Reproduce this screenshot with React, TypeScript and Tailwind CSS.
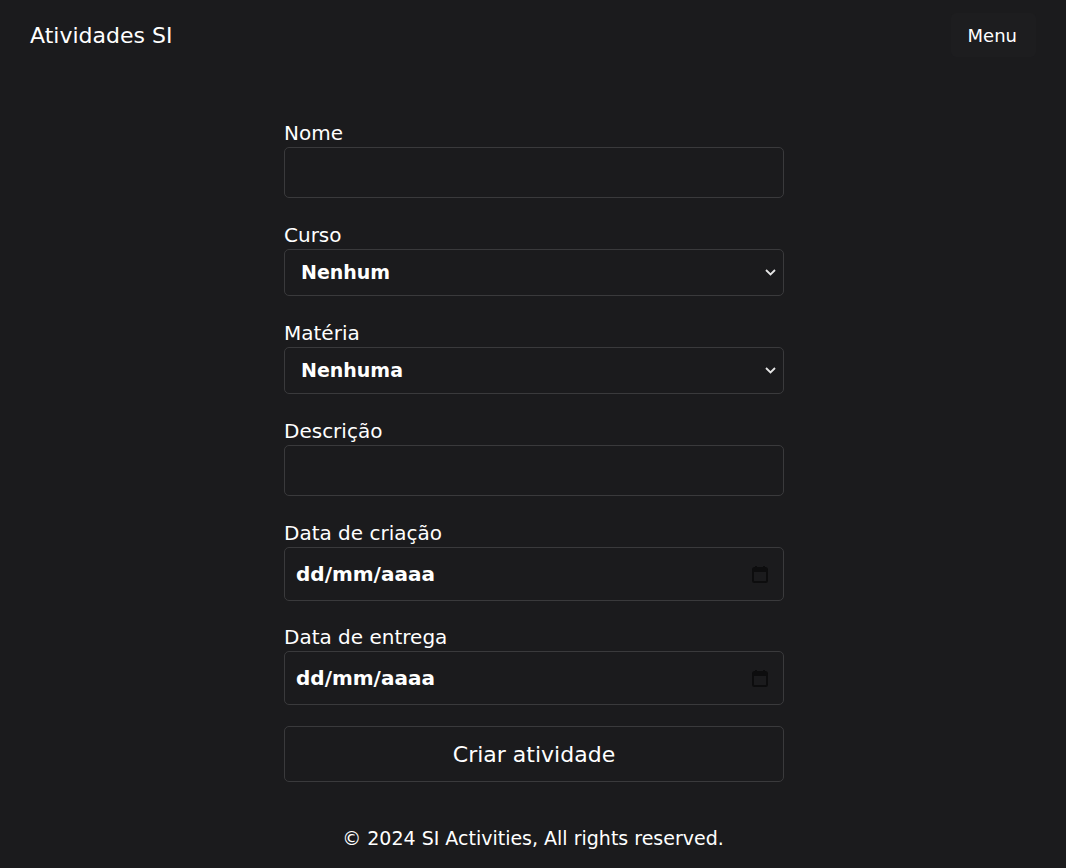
import React from "react";

const font = { fontFamily: '"DejaVu Sans", "Noto Sans", sans-serif' };

function Label({ children }: { children: React.ReactNode }) {
  return <div className="text-[20px] leading-[27px] text-white">{children}</div>;
}

function Chevron() {
  return (
    <svg width="11" height="7" viewBox="0 0 11 7" className="shrink-0">
      <path d="M1 1l4.5 4.5L10 1" fill="none" stroke="#e5e5e5" strokeWidth="1.8" />
    </svg>
  );
}

function CalendarIcon() {
  return (
    <svg width="16" height="18" viewBox="0 0 16 18" className="shrink-0">
      <path d="M4 1v3M12 1v3" stroke="#0d0d0e" strokeWidth="2" />
      <rect x="1" y="3" width="14" height="14" rx="1.5" fill="none" stroke="#0d0d0e" strokeWidth="2" />
      <rect x="1" y="3" width="14" height="4" fill="#0d0d0e" />
    </svg>
  );
}

function SelectBox({ value }: { value: string }) {
  return (
    <div className="flex h-[47px] items-center justify-between rounded-[5px] border border-[#3a3a3c] pl-4 pr-[7px]">
      <span className="text-[19px] font-bold text-white">{value}</span>
      <Chevron />
    </div>
  );
}

function DateBox() {
  return (
    <div className="flex h-[54px] items-center justify-between rounded-[5px] border border-[#3a3a3c] pl-[11px] pr-[15px]">
      <span className="text-[20px] font-bold text-white">dd/mm/aaaa</span>
      <CalendarIcon />
    </div>
  );
}

export default function App() {
  return (
    <div className="min-h-[868px] bg-[#1b1b1d] text-white" style={font}>
      <header className="flex h-[70px] items-center justify-between pl-[30px] pr-[30px]">
        <h1 className="text-[22px] font-normal text-white">Atividades SI</h1>
        <button className="h-[44px] rounded-[5px] bg-[#1d1d1f] pl-[17px] pr-[19px] text-[18px] font-normal text-white">
          Menu
        </button>
      </header>

      <div className="flex justify-center pl-[2px]">
        <main className="mt-[50px] w-[500px]">
          <div className="mb-6">
            <Label>Nome</Label>
            <div className="h-[51px] rounded-[5px] border border-[#3a3a3c]" />
          </div>
          <div className="mb-6">
            <Label>Curso</Label>
            <SelectBox value="Nenhum" />
          </div>
          <div className="mb-6">
            <Label>Matéria</Label>
            <SelectBox value="Nenhuma" />
          </div>
          <div className="mb-6">
            <Label>Descrição</Label>
            <div className="h-[51px] rounded-[5px] border border-[#3a3a3c]" />
          </div>
          <div className="mb-[23px]">
            <Label>Data de criação</Label>
            <DateBox />
          </div>
          <div className="mb-[21px]">
            <Label>Data de entrega</Label>
            <DateBox />
          </div>
          <button className="flex h-[56px] w-full items-center justify-center rounded-[5px] border border-[#3a3a3c] text-[22px] text-white">
            Criar atividade
          </button>
        </main>
      </div>

      <footer className="mt-[41px] pb-4 text-center text-[19px] leading-[30px] text-white">
        © 2024 SI Activities, All rights reserved.
      </footer>
    </div>
  );
}
